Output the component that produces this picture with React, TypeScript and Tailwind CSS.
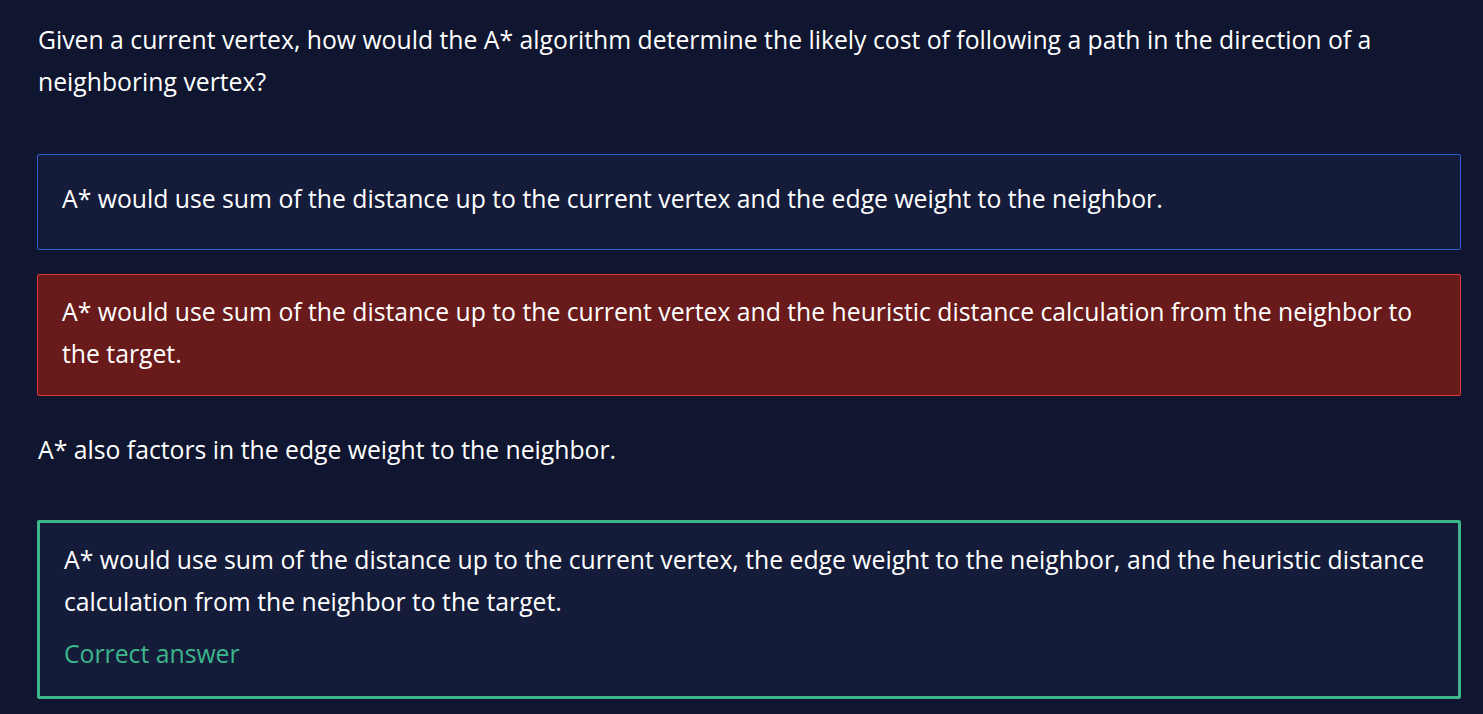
export default function App() {
  const font = { fontFamily: "'Open Sans', 'Noto Sans', sans-serif" };
  return (
    <div className="min-h-[714px] w-full bg-[#10162f] text-white" style={font}>
      <div className="pl-[38px] pr-[22px] pt-[19px]">
        <p className="text-[24.75px] leading-[42px] text-white">
          Given a current vertex, how would the A* algorithm determine the likely cost of following a path in the direction of a neighboring vertex?
        </p>
        <div className="mt-[51px] -ml-px flex flex-col">
          <div className="rounded-[2px] border border-[#2f5fd3] bg-[#141c3a] pl-[24px] pr-[24px] pt-[23px] pb-[29px]">
            <p className="text-[24.75px] leading-[42px]">
              A* would use sum of the distance up to the current vertex and the edge weight to the neighbor.
            </p>
          </div>
          <div className="mt-[24px] rounded-[2px] border border-[#df3a3a] bg-[#691a1a] pl-[24px] pr-[24px] pt-[16px] pb-[20px]">
            <p className="text-[24.75px] leading-[42px]">
              A* would use sum of the distance up to the current vertex and the heuristic distance calculation from the neighbor to the target.
            </p>
          </div>
          <p className="ml-px mt-[33px] text-[24.75px] leading-[42px]">A* also factors in the edge weight to the neighbor.</p>
          <div className="mt-[49px] rounded-[2px] border-[3px] border-[#3cb68a] bg-[#141c3a] pl-[24px] pr-[24px] pt-[16px] pb-[21px]">
            <p className="text-[24.75px] leading-[42px]">
              A* would use sum of the distance up to the current vertex, the edge weight to the neighbor, and the heuristic distance calculation from the neighbor to the target.
            </p>
            <p className="mt-[10px] text-[24.75px] leading-[42px] text-[#3cb68a]">Correct answer</p>
          </div>
        </div>
      </div>
    </div>
  );
}
